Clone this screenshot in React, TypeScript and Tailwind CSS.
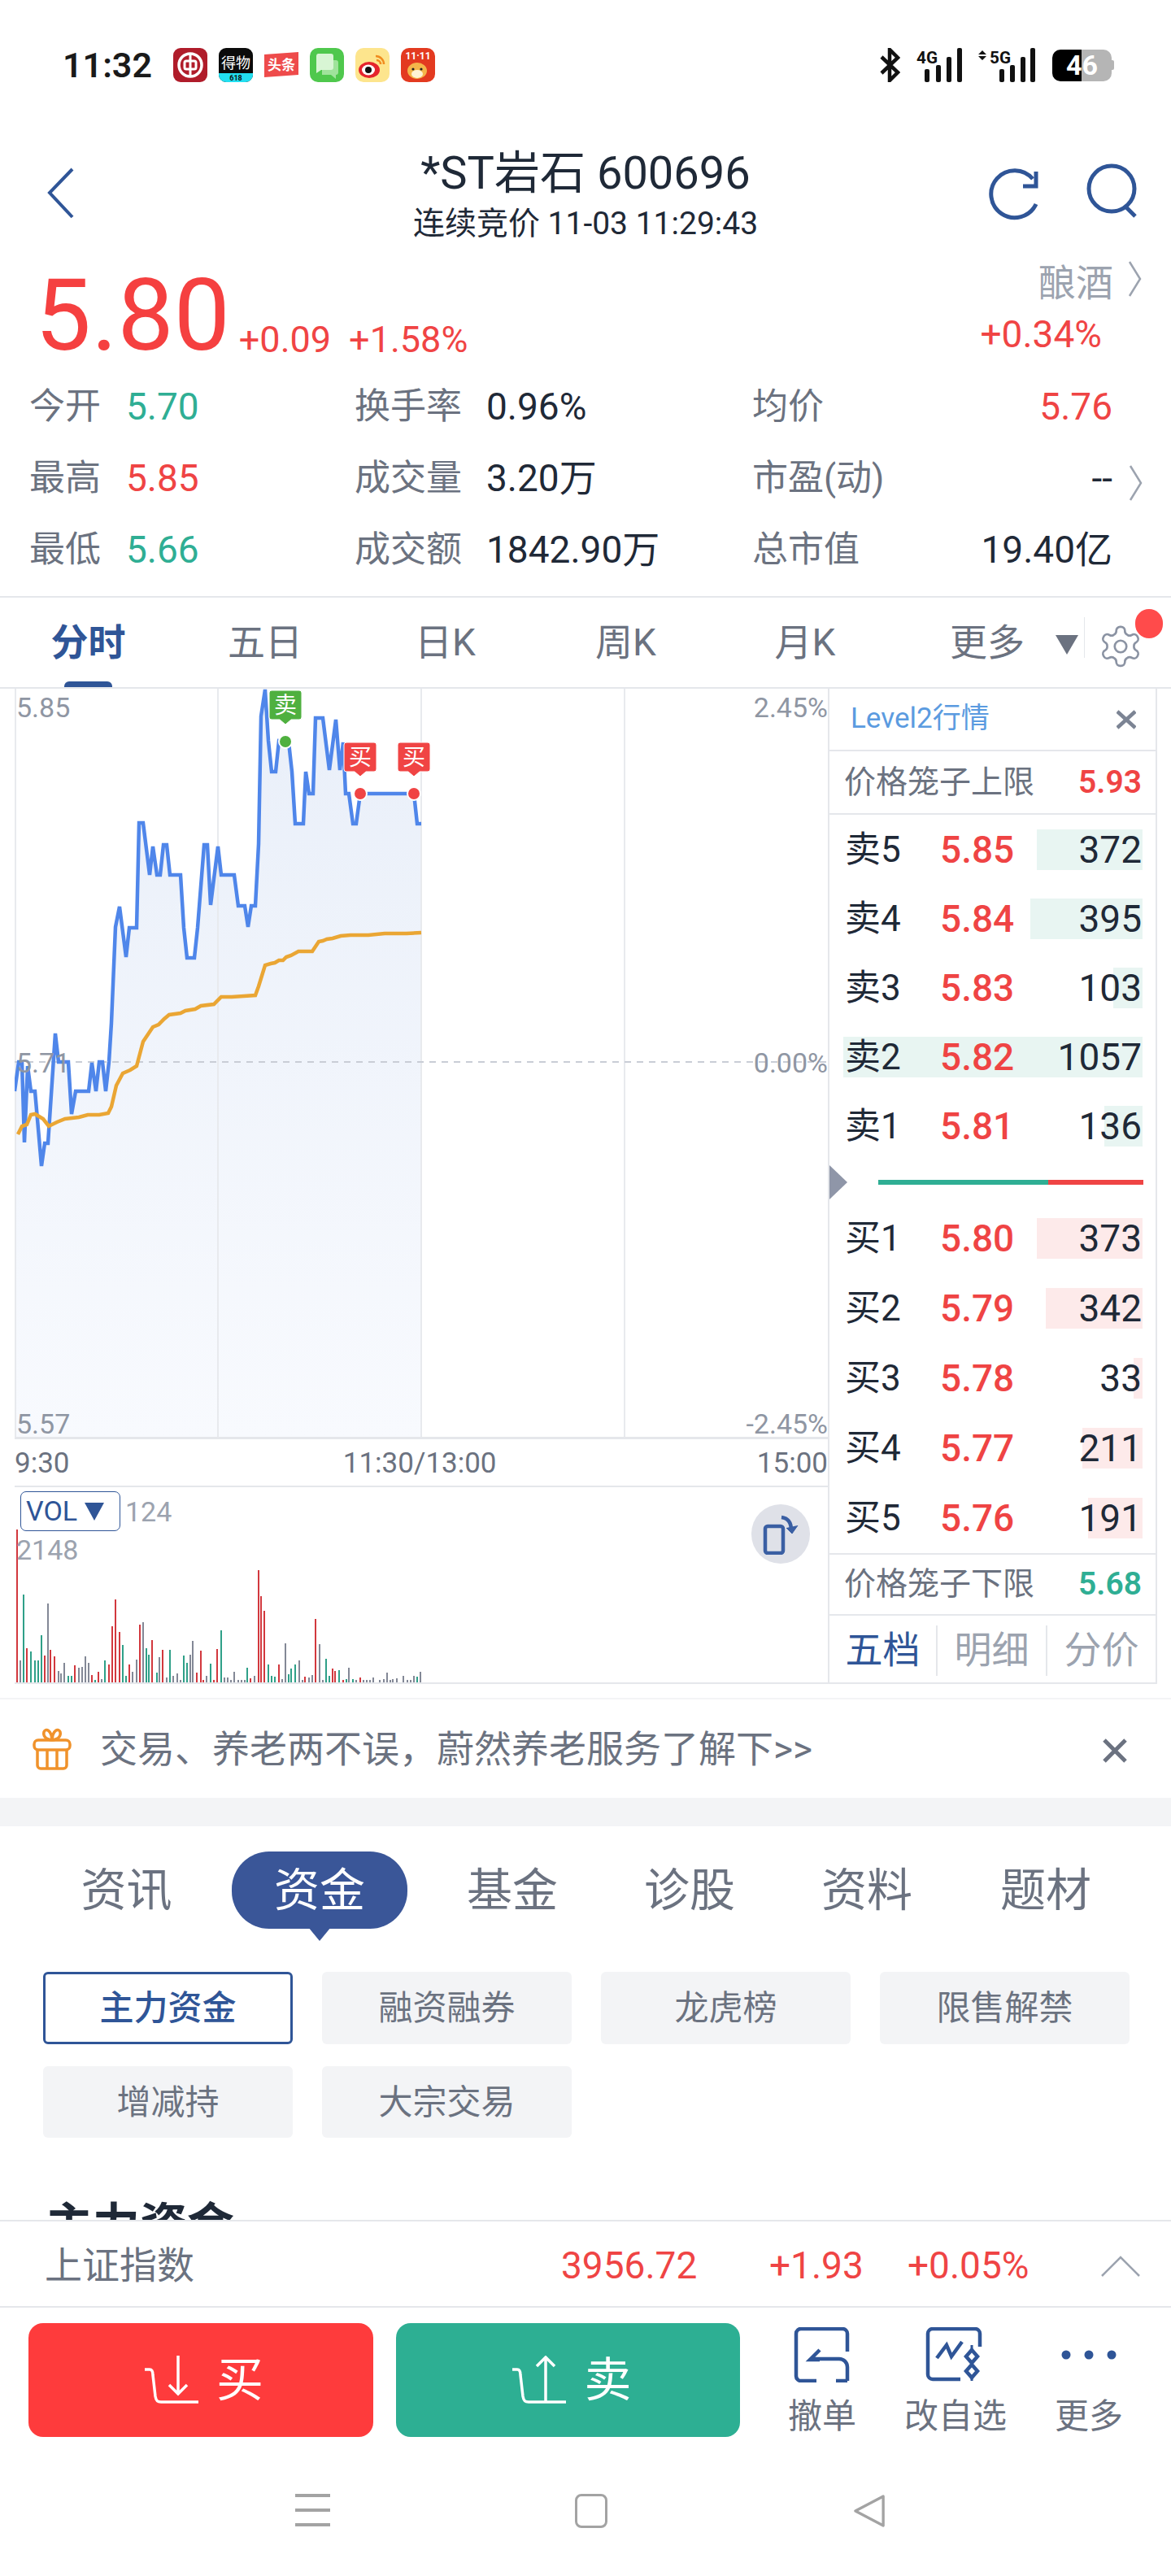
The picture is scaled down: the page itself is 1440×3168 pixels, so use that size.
import React from "react";

const blueLine = "18,1344 23,1308 27,1308 30,1407 34,1313 38,1344 43,1344 51,1436 55,1408 59,1408 68,1273 72,1308 84,1308 88,1372 93,1344 109,1344 113,1309 118,1344 122,1308 126,1308 130,1344 134,1308 137,1260 142,1142 147,1117 155,1179 159,1143 168,1143 171,1014 176,1014 184,1078 188,1043 193,1078 197,1078 201,1041 205,1041 209,1078 222,1078 226,1143 230,1180 239,1180 243,1143 251,1041 255,1041 259,1115 268,1043 272,1078 288,1078 293,1116 301,1116 305,1142 309,1116 314,1116 318,1040 321,883 326,850 330,913 334,951 339,951 343,913 355,915 359,951 363,1015 373,1015 376,951 380,978 385,978 388,885 397,885 405,949 413,887 418,949 422,915 425,978 429,978 434,1015 438,1015 443,978 509,978 513,1015 518,1015";
const avgLine = "22,1397 27,1387 33,1385 38,1373 43,1372 53,1378 60,1387 70,1382 80,1378 97,1376 108,1373 122,1373 133,1371 137,1363 143,1337 151,1322 160,1318 168,1313 176,1283 188,1265 195,1262 202,1255 208,1250 222,1248 228,1245 240,1243 247,1239 263,1237 272,1228 285,1228 300,1227 314,1226 318,1215 326,1189 333,1187 338,1186 343,1183 348,1183 352,1179 358,1177 367,1172 384,1172 392,1160 397,1159 402,1157 409,1156 419,1153 431,1152 453,1152 473,1150 500,1150 518,1149";

const volColors: Record<string, string> = { r: "#d2383e", g: "#2fa088", n: "#838896" };
const volBars: [number, number, string][] = [
  [33, 188, "r"], [39, 27, "n"], [45, 108, "g"], [51, 42, "r"], [58, 38, "g"], [66, 27, "g"], [72, 27, "g"], [78, 58, "g"], [84, 33, "r"], [90, 97, "n"],
  [96, 40, "r"], [103, 32, "r"], [110, 14, "n"], [116, 11, "n"], [122, 24, "n"], [129, 8, "g"], [135, 8, "g"], [142, 21, "r"], [149, 18, "n"], [155, 19, "n"],
  [161, 32, "n"], [167, 24, "n"], [173, 9, "r"], [180, 3, "g"], [186, 13, "r"], [192, 4, "n"], [199, 27, "g"], [206, 22, "r"], [212, 69, "r"], [219, 102, "r"],
  [226, 62, "r"], [232, 46, "g"], [238, 8, "g"], [244, 22, "r"], [250, 13, "n"], [258, 28, "n"], [264, 71, "r"], [270, 74, "n"], [276, 42, "g"], [282, 34, "g"],
  [288, 52, "r"], [296, 12, "g"], [302, 31, "n"], [308, 40, "r"], [315, 6, "n"], [321, 40, "g"], [328, 8, "n"], [335, 11, "n"], [341, 3, "n"], [347, 33, "g"],
  [353, 24, "g"], [359, 34, "n"], [365, 51, "n"], [372, 12, "r"], [379, 39, "r"], [385, 3, "r"], [391, 8, "n"], [398, 23, "g"], [404, 3, "r"], [411, 41, "r"],
  [418, 64, "g"], [424, 6, "n"], [430, 6, "n"], [436, 3, "n"], [442, 13, "n"], [450, 3, "n"], [456, 3, "n"], [462, 3, "n"], [468, 18, "g"], [474, 5, "r"],
  [481, 8, "n"], [488, 138, "r"], [494, 106, "r"], [500, 88, "r"], [507, 22, "g"], [513, 8, "g"], [519, 7, "g"], [527, 22, "r"], [533, 4, "n"], [539, 48, "n"],
  [545, 10, "g"], [551, 17, "g"], [558, 22, "g"], [565, 27, "n"], [571, 3, "n"], [577, 7, "r"], [584, 6, "n"], [590, 9, "n"], [596, 78, "r"], [604, 47, "n"],
  [610, 3, "n"], [616, 29, "g"], [622, 8, "g"], [628, 17, "r"], [634, 14, "r"], [641, 15, "g"], [648, 3, "r"], [654, 4, "g"], [660, 18, "n"], [667, 4, "g"],
  [673, 3, "n"], [681, 6, "r"], [687, 3, "n"], [693, 3, "n"], [699, 3, "n"], [705, 6, "n"], [718, 3, "n"], [725, 4, "n"], [731, 12, "n"], [737, 3, "n"],
  [743, 4, "n"], [750, 5, "n"], [763, 8, "n"], [770, 3, "n"], [776, 3, "n"], [782, 8, "n"], [788, 7, "g"], [795, 13, "n"],
];

const sellRows = [
  { label: "卖5", price: "5.85", qty: "372", bar: 130 },
  { label: "卖4", price: "5.84", qty: "395", bar: 138 },
  { label: "卖3", price: "5.83", qty: "103", bar: 36 },
  { label: "卖2", price: "5.82", qty: "1057", bar: 369 },
  { label: "卖1", price: "5.81", qty: "136", bar: 47 },
];
const buyRows = [
  { label: "买1", price: "5.80", qty: "373", bar: 130 },
  { label: "买2", price: "5.79", qty: "342", bar: 119 },
  { label: "买3", price: "5.78", qty: "33", bar: 11 },
  { label: "买4", price: "5.77", qty: "211", bar: 74 },
  { label: "买5", price: "5.76", qty: "191", bar: 67 },
];

function Chevron({ className }: { className: string }) {
  return (
    <svg viewBox="0 0 18 46" className={className} fill="none" stroke="#9ca3af" strokeWidth="2.5">
      <path d="M2 2 L15 23 L2 44" />
    </svg>
  );
}

function SignalBars({ x }: { x: number[] }) {
  const heights = [16, 21, 31, 42];
  return (
    <>
      {x.map((left, i) => (
        <rect key={left} x={left} y={42 - heights[i]} width="6" height={heights[i]} rx="2" fill="#111" />
      ))}
    </>
  );
}

function AppIcons() {
  return (
    <div className="flex items-center gap-[14px]">
      <svg width="42" height="42" viewBox="0 0 42 42">
        <rect width="42" height="42" rx="9" fill="#b01c2a" />
        <circle cx="21" cy="21" r="14" fill="none" stroke="#fff" strokeWidth="3.5" />
        <rect x="14" y="16" width="14" height="10" rx="2" fill="none" stroke="#fff" strokeWidth="3" />
        <path d="M21 7 V35" stroke="#fff" strokeWidth="3" />
      </svg>
      <svg width="42" height="42" viewBox="0 0 42 42">
        <rect width="42" height="42" rx="9" fill="#0b0b0b" />
        <path d="M0 31 H42 V33 A9 9 0 0 1 33 42 H9 A9 9 0 0 1 0 33 Z" fill="#22dff0" />
        <text x="21" y="25" textAnchor="middle" fontSize="18" fill="#fff" fontFamily="'Noto Sans CJK SC'">得物</text>
        <text x="21" y="40" textAnchor="middle" fontSize="9" fontWeight="700" fill="#111" fontFamily="Roboto">618</text>
      </svg>
      <svg width="42" height="42" viewBox="0 0 42 42">
        <path d="M0 8 L42 5 V33 L0 36 Z" fill="#ee4b4b" />
        <text x="21" y="27" textAnchor="middle" fontSize="17" fontWeight="700" fill="#fff" fontFamily="'Noto Sans CJK SC'">头条</text>
      </svg>
      <svg width="42" height="42" viewBox="0 0 42 42">
        <rect width="42" height="42" rx="10" fill="#4fc84d" />
        <path d="M15 15 H32 A3 3 0 0 1 35 18 V30 A3 3 0 0 1 32 33 V38 L26 33 H15 Z" fill="#9fe39b" />
        <path d="M10 7 H26 A3 3 0 0 1 29 10 V24 A3 3 0 0 1 26 27 H14 L8 31 V10 A3 3 0 0 1 10 7 Z" fill="#d8f5d4" />
      </svg>
      <svg width="42" height="42" viewBox="0 0 42 42">
        <rect width="42" height="42" rx="10" fill="#fde58d" />
        <ellipse cx="17" cy="27" rx="13" ry="10" fill="#e5242c" />
        <ellipse cx="16" cy="27" rx="8" ry="6.5" fill="#fff" />
        <circle cx="16" cy="27" r="4" fill="#111" />
        <path d="M25 10 A10 10 0 0 1 35 20 M26 15 A5 5 0 0 1 31 20" fill="none" stroke="#f08c1f" strokeWidth="2.5" />
      </svg>
      <svg width="42" height="42" viewBox="0 0 42 42">
        <rect width="42" height="42" rx="10" fill="#e33a20" />
        <text x="21" y="14" textAnchor="middle" fontSize="12" fontWeight="700" fill="#fff" fontFamily="Roboto">11·11</text>
        <ellipse cx="20" cy="28" rx="12" ry="10" fill="#f4b64a" />
        <ellipse cx="20" cy="32" rx="7" ry="5" fill="#fff3d6" />
        <circle cx="15" cy="26" r="1.6" fill="#222" />
        <circle cx="25" cy="26" r="1.6" fill="#222" />
      </svg>
    </div>
  );
}

function StatusBar() {
  return (
    <div className="flex h-[178px] items-start pl-[77px] pr-[70px] pt-[59px]">
      <span className="mr-[30px] w-[106px] text-[43px] font-semibold leading-[42px] text-[#1a1a1a]">11:32</span>
      <AppIcons />
      <div className="ml-auto flex items-center">
        <svg width="25" height="42" viewBox="0 0 25 42" fill="none" stroke="#111" strokeWidth="4.5">
          <path d="M2 11 L22 30 L12 40 V2 L22 12 L2 31" />
        </svg>
        <svg className="ml-[20px] overflow-visible" width="56" height="42" viewBox="0 0 56 42">
          <text x="0" y="19" fontSize="21" fontWeight="700" fill="#111" fontFamily="Roboto" textLength="26" lengthAdjust="spacingAndGlyphs">4G</text>
          <SignalBars x={[10, 24, 37, 50]} />
        </svg>
        <svg className="ml-[19px] overflow-visible" width="72" height="42" viewBox="0 0 72 42">
          <path d="M6 3 L11 8 H1 Z M1 10 H11 L6 15 Z" fill="#111" />
          <text x="15" y="19" fontSize="21" fontWeight="700" fill="#111" fontFamily="Roboto" textLength="26" lengthAdjust="spacingAndGlyphs">5G</text>
          <SignalBars x={[27, 40, 53, 65]} />
        </svg>
        <div className="ml-[20px] flex items-center">
          <div className="flex h-[39px] w-[73px] items-center justify-center rounded-[10px] bg-[linear-gradient(90deg,#000_36px,#b5b5b5_36px)] text-[34px] font-bold leading-none text-white">46</div>
          <div className="h-[12px] w-[3px] rounded-r-[2px] bg-[#b5b5b5]" />
        </div>
      </div>
    </div>
  );
}

function Header() {
  return (
    <div className="relative flex h-[120px] items-start justify-center">
      <svg className="absolute left-[58px] top-[28px]" width="34" height="64" viewBox="0 0 34 64" fill="none" stroke="#2f5597" strokeWidth="4">
        <path d="M31 2 L3 31 L31 61" />
      </svg>
      <div className="flex flex-col items-center">
        <div className="text-[56px] leading-[70px] text-[#1f2937]">*ST岩石 600696</div>
        <div className="mt-[2px] text-[39px] leading-[50px] text-[#1f2937]">连续竞价 11-03 11:29:43</div>
      </div>
      <svg className="absolute left-[1216px] top-[27px]" width="66" height="68" viewBox="0 0 66 68" fill="none" stroke="#2f5597" strokeWidth="5">
        <path d="M58 46 A29 29 0 1 1 54 15" />
        <path d="M58 6 V24 H42" />
      </svg>
      <svg className="absolute left-[1334px] top-[22px]" width="68" height="68" viewBox="0 0 68 68" fill="none" stroke="#2f5597" strokeWidth="5">
        <circle cx="33" cy="32" r="28" />
        <path d="M50 54 L62 66" />
      </svg>
    </div>
  );
}

function PriceBlock() {
  return (
    <div className="flex h-[158px] justify-between pl-[43px] pr-[35px]">
      <div className="flex items-start">
        <span className="mt-[22px] text-[123px] leading-[136px] text-[#f54040]">5.80</span>
        <span className="ml-[11px] mt-[97px] text-[45px] leading-[46px] text-[#f04444]">+0.09</span>
        <span className="ml-[22px] mt-[97px] text-[45px] leading-[46px] text-[#f04444]">+1.58%</span>
      </div>
      <div className="flex flex-col items-end pt-[25px]">
        <div className="flex items-start">
          <span className="text-[46px] leading-[50px] text-[#9ca3af]">酿酒</span>
          <Chevron className="ml-[18px] mt-[-3px] h-[46px] w-[18px]" />
        </div>
        <span className="mr-[50px] mt-[13px] text-[46px] leading-[50px] text-[#f04444]">+0.34%</span>
      </div>
    </div>
  );
}

function QuoteCell({ text, color }: { text: string; color: string }) {
  return <span className={color}>{text}</span>;
}

function QuoteGrid() {
  const label = "text-[44px] text-[#6b7280]";
  const dark = "text-[#1f2937]";
  const red = "text-[#ef4444]";
  const green = "text-[#2fae94]";
  return (
    <div className="grid h-[277px] grid-cols-[119px_281px_162px_327px_443px] grid-rows-[88px_88px_88px] items-center pl-[36px] text-[46px] leading-[50px]">
      <QuoteCell text="今开" color={label} /><QuoteCell text="5.70" color={green} /><QuoteCell text="换手率" color={label} /><QuoteCell text="0.96%" color={dark} />
      <div className="flex justify-between"><QuoteCell text="均价" color={label} /><QuoteCell text="5.76" color={red} /></div>
      <QuoteCell text="最高" color={label} /><QuoteCell text="5.85" color={red} /><QuoteCell text="成交量" color={label} /><QuoteCell text="3.20万" color={dark} />
      <div className="relative flex justify-between"><QuoteCell text="市盈(动)" color={label} /><QuoteCell text="--" color={dark} /><Chevron className="absolute left-[463px] top-[8px] h-[46px] w-[18px]" /></div>
      <QuoteCell text="最低" color={label} /><QuoteCell text="5.66" color={green} /><QuoteCell text="成交额" color={label} /><QuoteCell text="1842.90万" color={dark} />
      <div className="flex justify-between"><QuoteCell text="总市值" color={label} /><QuoteCell text="19.40亿" color={dark} /></div>
    </div>
  );
}

function PeriodTabs() {
  const tabs = [
    { text: "五日", w: "w-[218px]" },
    { text: "日K", w: "w-[225px]" },
    { text: "周K", w: "w-[219px]" },
    { text: "月K", w: "w-[222px]" },
    { text: "更多", w: "w-[226px]" },
  ];
  return (
    <div className="relative flex h-[114px] items-center border-y-2 border-[#e5e7eb] text-[46px] text-[#6b7280]">
      <div className="relative flex h-full w-[217px] items-center justify-center font-semibold text-[#2f5597]">
        分时
        <div className="absolute bottom-0 left-[79px] h-[7px] w-[59px] rounded-t-[6px] bg-[#2f5597]" />
      </div>
      {tabs.map((t) => (
        <div key={t.text} className={`flex items-center justify-center ${t.w}`}>{t.text}</div>
      ))}
      <svg className="absolute left-[1297px] top-[45px]" width="30" height="26" viewBox="0 0 30 26"><path d="M1 1 H29 L15 25 Z" fill="#6b7280" /></svg>
      <div className="absolute left-[1333px] top-[24px] h-[50px] w-px bg-[#e5e7eb]" />
      <svg className="absolute left-[1349px] top-[30px]" width="58" height="60" viewBox="0 0 24 24" fill="none" stroke="#8b93a3" strokeWidth="1.1">
        <path d="M12.2 2h-.4a2 2 0 0 0-2 2v.2a2 2 0 0 1-1 1.7l-.4.3a2 2 0 0 1-2 0l-.2-.1a2 2 0 0 0-2.7.7l-.2.4a2 2 0 0 0 .7 2.7l.2.1a2 2 0 0 1 1 1.7v.5a2 2 0 0 1-1 1.7l-.2.1a2 2 0 0 0-.7 2.7l.2.4a2 2 0 0 0 2.7.7l.2-.1a2 2 0 0 1 2 0l.4.3a2 2 0 0 1 1 1.7v.2a2 2 0 0 0 2 2h.4a2 2 0 0 0 2-2v-.2a2 2 0 0 1 1-1.7l.4-.3a2 2 0 0 1 2 0l.2.1a2 2 0 0 0 2.7-.7l.2-.4a2 2 0 0 0-.7-2.7l-.2-.1a2 2 0 0 1-1-1.7v-.5a2 2 0 0 1 1-1.7l.2-.1a2 2 0 0 0 .7-2.7l-.2-.4a2 2 0 0 0-2.7-.7l-.2.1a2 2 0 0 1-2 0l-.4-.3a2 2 0 0 1-1-1.7V4a2 2 0 0 0-2-2z" />
        <circle cx="12" cy="12" r="3" />
      </svg>
      <div className="absolute left-[1396px] top-[14px] h-[36px] w-[34px] rounded-full bg-[#ff4b4b]" />
    </div>
  );
}

function TradeTag({ text, x, y, color }: { text: string; x: number; y: number; color: string }) {
  return (
    <g>
      <path d={`M${x + 3} ${y} H${x + 37} A3 3 0 0 1 ${x + 40} ${y + 3} V${y + 33} A3 3 0 0 1 ${x + 37} ${y + 36} H${x + 27} L${x + 20} ${y + 42} L${x + 13} ${y + 36} H${x + 3} A3 3 0 0 1 ${x} ${y + 33} V${y + 3} A3 3 0 0 1 ${x + 3} ${y} Z`} fill={color} stroke="#fff" strokeWidth="1" />
      <text x={x + 20} y={y + 28} textAnchor="middle" fontSize="28" fill="#fff" fontFamily="'Noto Sans CJK SC'">{text}</text>
    </g>
  );
}

function IntradayChart() {
  const labelBase = "absolute text-[34px] leading-[36px] text-[#8f96a3]";
  return (
    <div className="relative h-[923px] w-[1000px] border-b-[3px] border-[#e5e7eb]">
      <svg width="1000" height="920" viewBox="18 849 1000 920" className="block">
        <defs>
          <linearGradient id="areaFill" x1="0" y1="0" x2="0" y2="1">
            <stop offset="0" stopColor="#e9eff9" />
            <stop offset="1" stopColor="#f8fafe" />
          </linearGradient>
        </defs>
        <polygon points={`18,1769 ${blueLine} 518,1769`} fill="url(#areaFill)" />
        {[19, 268, 518, 768].map((x) => (
          <line key={x} x1={x} x2={x} y1="849" y2="1769" stroke="#e8eaee" strokeWidth="2" />
        ))}
        <line x1="18" x2="1018" y1="1308" y2="1308" stroke="#c9cdd6" strokeWidth="2" strokeDasharray="8 7" />
        <polyline points={blueLine} fill="none" stroke="#4f86ea" strokeWidth="4.5" strokeLinejoin="miter" />
        <polyline points={avgLine} fill="none" stroke="#eaa634" strokeWidth="4.5" />
        <TradeTag text="卖" x={331} y={851} color="#4fb03f" />
        <TradeTag text="买" x={423} y={915} color="#f04444" />
        <TradeTag text="买" x={489} y={915} color="#f04444" />
        <circle cx="351" cy="914" r="8" fill="#4fb03f" stroke="#fff" strokeWidth="2" />
        <circle cx="443" cy="978" r="8" fill="#f04444" stroke="#fff" strokeWidth="2" />
        <circle cx="509" cy="978" r="8" fill="#f04444" stroke="#fff" strokeWidth="2" />
      </svg>
      <span className={`${labelBase} left-[2px] top-[5px]`}>5.85</span>
      <span className={`${labelBase} left-[2px] top-[442px]`}>5.71</span>
      <span className={`${labelBase} left-[2px] bottom-[-2px]`}>5.57</span>
      <span className={`${labelBase} right-[0px] top-[5px]`}>2.45%</span>
      <span className={`${labelBase} right-[0px] top-[442px]`}>0.00%</span>
      <span className={`${labelBase} right-[0px] bottom-[-2px]`}>-2.45%</span>
    </div>
  );
}

function VolumePanel() {
  return (
    <div className="relative h-[244px] w-[1000px] border-y-2 border-[#e5e7eb]">
      <svg width="1000" height="240" viewBox="18 1829 1000 240" className="absolute left-0 top-0">
        {volBars.map(([zx, h, c], i) => (
          <rect key={i} x={Math.round(zx / 1.537) - 1} y={2069 - h} width="2" height={h} fill={volColors[c]} />
        ))}
      </svg>
      <div className="absolute left-[7px] top-[5px] flex h-[49px] w-[123px] items-center gap-[8px] rounded-[7px] border border-[#2f5597] bg-white pl-[6px] text-[34px] text-[#2f5597]">
        VOL
        <svg width="26" height="24" viewBox="0 0 26 24"><path d="M1 1 H25 L13 23 Z" fill="#2f5597" /></svg>
      </div>
      <span className="absolute left-[136px] top-[12px] text-[34px] leading-[36px] text-[#9ca3af]">124</span>
      <span className="absolute left-[2px] top-[59px] text-[34px] leading-[36px] text-[#9ca3af]">2148</span>
      <div className="absolute left-[906px] top-[21px] flex h-[73px] w-[72px] items-center justify-center rounded-full bg-[#dfe1e8]">
        <svg width="46" height="50" viewBox="0 0 46 50" fill="none" stroke="#3a5fa3" strokeWidth="4.5">
          <rect x="4" y="15" width="22" height="33" rx="3" />
          <path d="M24 4 C32 5 36 10 36 20" />
          <path d="M30 17 L37 24 L44 14" fill="#3a5fa3" strokeWidth="1" />
        </svg>
      </div>
    </div>
  );
}

function DepthRow({ row, color, h }: { row: { label: string; price: string; qty: string; bar: number }; color: string; h: string }) {
  const full = row.bar > 300;
  return (
    <div className={`relative flex items-center pl-[19px] pr-[17px] text-[46px] leading-[50px] ${h}`}>
      <div className={`absolute right-[16px] top-1/2 h-[50px] -translate-y-1/2 ${color} ${full ? "left-[17px]" : ""}`} style={full ? undefined : { width: row.bar }} />
      <span className="relative w-[117px] text-[44px] text-[#1f2937]">{row.label}</span>
      <span className="relative font-medium text-[#ef4444]">{row.price}</span>
      <span className="relative ml-auto text-[#1f2937]">{row.qty}</span>
    </div>
  );
}

function DepthPanel() {
  return (
    <div className="flex h-[1224px] w-[405px] flex-col border-x-2 border-b-2 border-[#e5e7eb]">
      <div className="flex h-[77px] items-center justify-between border-b-2 border-[#e5e7eb] pl-[26px] pr-[24px] text-[35px] text-[#5b9be0]">
        Level2行情
        <svg width="24" height="24" viewBox="0 0 24 24" stroke="#7c8494" strokeWidth="4.5"><path d="M1 2 L23 22 M23 2 L1 22" /></svg>
      </div>
      <div className="flex h-[78px] items-center justify-between border-b-2 border-[#e5e7eb] pl-[18px] pr-[17px] text-[39px]">
        <span className="text-[#6b7280]">价格笼子上限</span>
        <span className="font-semibold text-[#ef4444]">5.93</span>
      </div>
      {sellRows.map((r) => <DepthRow key={r.label} row={r} color="bg-[#e8f5f2]" h="h-[85px]" />)}
      <div className="flex h-[53px] items-center">
        <svg width="22" height="42" viewBox="0 0 22 42"><path d="M0 0 L22 21 L0 42 Z" fill="#8f96a8" /></svg>
        <div className="ml-[38px] flex h-[6px] w-[326px]">
          <div className="w-[209px] bg-[#2fae94]" />
          <div className="w-[117px] bg-[#ef4444]" />
        </div>
      </div>
      {buyRows.map((r) => <DepthRow key={r.label} row={r} color="bg-[#fdeaea]" h="h-[86px]" />)}
      <div className="flex h-[77px] items-center justify-between border-y-2 border-[#e5e7eb] pl-[18px] pr-[17px] text-[39px]">
        <span className="text-[#6b7280]">价格笼子下限</span>
        <span className="font-semibold text-[#2fae94]">5.68</span>
      </div>
      <div className="flex flex-1 items-center pt-[3px] text-[46px] text-[#9ca3af]">
        <div className="flex h-[62px] w-[133px] items-center justify-center border-r-2 border-[#e5e7eb] text-[#2f5597]">五档</div>
        <div className="flex h-[62px] w-[135px] items-center justify-center border-r-2 border-[#e5e7eb]">明细</div>
        <div className="flex h-[62px] flex-1 items-center justify-center">分价</div>
      </div>
    </div>
  );
}

function Banner() {
  return (
    <div className="relative flex h-[121px] items-center pl-[39px] pr-[56px]">
      <svg width="50" height="52" viewBox="0 0 50 52" fill="none" stroke="#f0922b" strokeWidth="3.5">
        <rect x="3" y="15" width="44" height="12" rx="5" />
        <path d="M7 27 V46 A4 4 0 0 0 11 50 H39 A4 4 0 0 0 43 46 V27 M19 27 V50 M31 27 V50" />
        <path d="M25 15 C16 14 14 9 15 5 C17 0 24 2 25 15 C26 2 33 0 35 5 C36 9 34 14 25 15" />
      </svg>
      <span className="ml-[34px] mt-[2px] text-[46px] text-[#6b7280]">交易、养老两不误，蔚然养老服务了解下&gt;&gt;</span>
      <svg className="ml-auto mr-[-2px] mt-[4px]" width="30" height="30" viewBox="0 0 30 30" stroke="#6b7280" strokeWidth="5"><path d="M2 2 L28 28 M28 2 L2 28" /></svg>
    </div>
  );
}

function SectionTabs() {
  const tabs = ["资讯", "资金", "基金", "诊股", "资料", "题材"];
  return (
    <div className="grid h-[179px] grid-cols-[223px_252px_222px_214px_222px_218px] pl-[44px] pt-[31px]">
      {tabs.map((t, i) =>
        i === 1 ? (
          <div key={t} className="relative flex h-[95px] w-[216px] items-center justify-center justify-self-center rounded-[46px] bg-[#3a5698] text-[56px] text-white">
            {t}
            <svg className="absolute left-[94px] top-[93px]" width="28" height="17" viewBox="0 0 28 17"><path d="M0 0 H28 L14 17 Z" fill="#3a5698" /></svg>
          </div>
        ) : (
          <div key={t} className="flex h-[95px] items-center justify-center text-[56px] text-[#6b7280]">{t}</div>
        ),
      )}
    </div>
  );
}

function SubChips() {
  const chips = ["融资融券", "龙虎榜", "限售解禁", "增减持", "大宗交易"];
  return (
    <div className="grid h-[204px] grid-cols-[repeat(4,307px)] grid-rows-[89px_88px] gap-x-[36px] gap-y-[27px] pl-[53px]">
      <div className="flex items-center justify-center rounded-[6px] border-[3px] border-[#2f5597] text-[42px] font-medium text-[#2f5597]">主力资金</div>
      {chips.map((c) => (
        <div key={c} className="flex items-center justify-center rounded-[6px] bg-[#f3f4f6] text-[42px] text-[#6b7280]">{c}</div>
      ))}
    </div>
  );
}

function IndexBar() {
  return (
    <div className="relative z-10 flex h-[108px] items-center border-y-2 border-[#e5e7eb] bg-white pl-[55px] pt-[4px] text-[46px] text-[#ef4444]">
      <span className="w-[635px] text-[46px] text-[#6b7280]">上证指数</span>
      <span className="w-[256px]">3956.72</span>
      <span className="w-[170px]">+1.93</span>
      <span>+0.05%</span>
      <svg className="absolute left-[1353px] top-[42px]" width="50" height="26" viewBox="0 0 50 26" fill="none" stroke="#9ca3af" strokeWidth="2.5"><path d="M2 25 L25 2 L48 25" /></svg>
    </div>
  );
}

function ActionIcon({ label, children }: { label: string; children: React.ReactNode }) {
  return (
    <div className="flex w-[164px] flex-col items-center pt-[4px]">
      <div className="flex h-[70px] items-center justify-center">{children}</div>
      <span className="mt-[16px] text-[42px] leading-[50px] text-[#6b7280]">{label}</span>
    </div>
  );
}

function BottomActions() {
  return (
    <div className="flex h-[201px] items-start pl-[35px] pt-[19px]">
      <div className="flex h-[140px] w-[424px] items-center justify-center gap-[20px] rounded-[18px] bg-[#fe3b3c] pl-[6px] text-[58px] text-white">
        <svg width="70" height="60" viewBox="0 0 70 60" fill="none" stroke="#fff" strokeWidth="3.5">
          <path d="M2 17 H8 C11 17 12 20 12 24 L15 50 C16 56 18 57 22 57 H68" />
          <path d="M43 0 V46 M32 36 L43 47 L54 36" />
        </svg>
        买
      </div>
      <div className="ml-[28px] flex h-[140px] w-[423px] items-center justify-center gap-[20px] rounded-[18px] bg-[#2daf93] pl-[8px] text-[58px] text-white">
        <svg width="70" height="60" viewBox="0 0 70 60" fill="none" stroke="#fff" strokeWidth="3.5">
          <path d="M2 17 H8 C11 17 12 20 12 24 L15 50 C16 56 18 57 22 57 H68" />
          <path d="M43 58 V2 M32 13 L43 2 L54 13" />
        </svg>
        卖
      </div>
      <div className="ml-[19px] flex">
        <ActionIcon label="撤单">
          <svg width="70" height="68" viewBox="0 0 70 68" fill="none" stroke="#2f5597" strokeWidth="4.5">
            <path d="M66 30 V8 A6 6 0 0 0 60 2 H10 A6 6 0 0 0 3 8 V60 A6 6 0 0 0 10 66 H28" />
            <path d="M66 66 H52" />
            <path d="M32 28 L20 40 L32 40 M20 39 H56 A10 10 0 0 1 66 49 V66" />
          </svg>
        </ActionIcon>
        <ActionIcon label="改自选">
          <svg width="76" height="68" viewBox="0 0 76 68" fill="none" stroke="#2f5597" strokeWidth="4.5">
            <path d="M68 24 V8 A6 6 0 0 0 62 2 H10 A6 6 0 0 0 4 8 V58 A6 6 0 0 0 10 64 H44" />
            <path d="M15 38 L27 22 L33 36 L46 18" />
            <path d="M58 22 V66" strokeWidth="3" />
            <path d="M58 28 L65 36 L58 44 L51 36 Z M58 46 L65 54 L58 62 L51 54 Z" fill="#fff" />
          </svg>
        </ActionIcon>
        <ActionIcon label="更多">
          <svg width="70" height="14" viewBox="0 0 70 14" fill="#2f5597">
            <circle cx="7" cy="7" r="5.5" /><circle cx="35" cy="7" r="5.5" /><circle cx="63" cy="7" r="5.5" />
          </svg>
        </ActionIcon>
      </div>
    </div>
  );
}

function NavBar() {
  return (
    <div className="flex items-start pl-[363px] pt-[28px]">
      <div className="flex h-[40px] w-[43px] flex-col justify-between">
        <div className="h-[4px] bg-[#a3a3a3]" />
        <div className="h-[4px] bg-[#a3a3a3]" />
        <div className="h-[4px] bg-[#a3a3a3]" />
      </div>
      <div className="ml-[301px] h-[42px] w-[40px] rounded-[8px] border-[3px] border-[#a3a3a3]" />
      <svg className="ml-[302px]" width="40" height="42" viewBox="0 0 42 42" fill="none" stroke="#a3a3a3" strokeWidth="3.5" strokeLinejoin="round">
        <path d="M39 2 L3 21 L39 40 Z" />
      </svg>
    </div>
  );
}

export default function App() {
  return (
    <div className="h-[3168px] w-[1440px] overflow-hidden bg-white font-[Roboto,'Noto_Sans_CJK_SC',sans-serif]">
      <StatusBar />
      <Header />
      <PriceBlock />
      <QuoteGrid />
      <PeriodTabs />
      <div className="flex pl-[18px]">
        <div className="flex w-[1000px] flex-col">
          <IntradayChart />
          <div className="flex h-[57px] items-center justify-between pt-[4px] text-[35px] text-[#6b7280]">
            <span>9:30</span>
            <span className="ml-[16px]">11:30/13:00</span>
            <span>15:00</span>
          </div>
          <VolumePanel />
        </div>
        <DepthPanel />
      </div>
      <div className="h-[19px] border-b-2 border-[#f3f4f6]" />
      <Banner />
      <div className="h-[35px] bg-[#f3f4f6]" />
      <SectionTabs />
      <SubChips />
      <div className="h-[101px] overflow-hidden pl-[56px] pt-[73px] text-[58px] font-bold leading-[70px] text-[#1f2937]">主力资金</div>
      <IndexBar />
      <BottomActions />
      <NavBar />
    </div>
  );
}
